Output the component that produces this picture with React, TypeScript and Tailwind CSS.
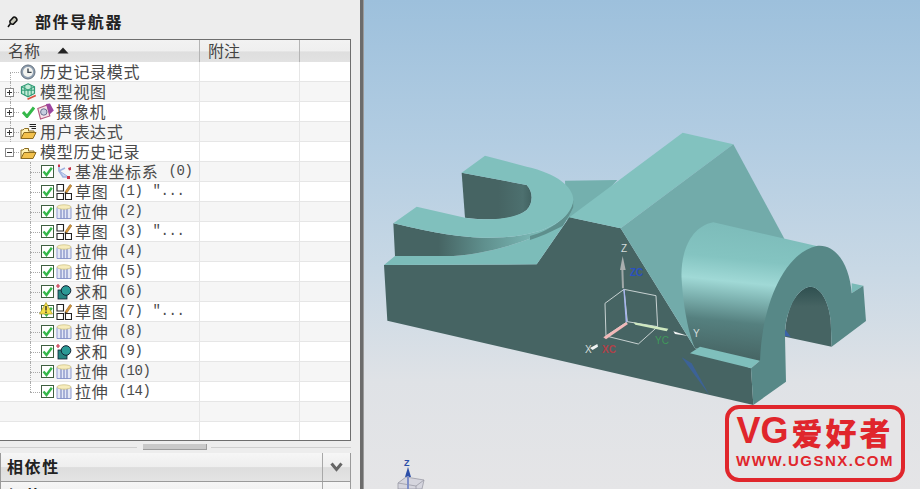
const cjk = "[font-family:'Noto_Sans_CJK_SC',sans-serif]";

type IconKind = "clock" | "view" | "camera" | "folder" | "folderNotes" | "csys" | "sketch" | "extrude" | "unite";

type Row = {
  label: string;
  num?: string;
  note?: boolean;
  icon?: IconKind;
  depth?: 0 | 1;
  toggle?: "+" | "-";
  check?: boolean;
  warn?: boolean;
};

const ROWS: Row[] = [
  { label: "历史记录模式", icon: "clock" },
  { label: "模型视图", icon: "view", toggle: "+" },
  { label: "摄像机", icon: "camera", toggle: "+", check: true },
  { label: "用户表达式", icon: "folderNotes", toggle: "+" },
  { label: "模型历史记录", icon: "folder", toggle: "-" },
  { label: "基准坐标系", num: "(0)", icon: "csys", depth: 1, check: true },
  { label: "草图", num: "(1)", note: true, icon: "sketch", depth: 1, check: true },
  { label: "拉伸", num: "(2)", icon: "extrude", depth: 1, check: true },
  { label: "草图", num: "(3)", note: true, icon: "sketch", depth: 1, check: true },
  { label: "拉伸", num: "(4)", icon: "extrude", depth: 1, check: true },
  { label: "拉伸", num: "(5)", icon: "extrude", depth: 1, check: true },
  { label: "求和", num: "(6)", icon: "unite", depth: 1, check: true },
  { label: "草图", num: "(7)", note: true, icon: "sketch", depth: 1, check: true, warn: true },
  { label: "拉伸", num: "(8)", icon: "extrude", depth: 1, check: true },
  { label: "求和", num: "(9)", icon: "unite", depth: 1, check: true },
  { label: "拉伸", num: "(10)", icon: "extrude", depth: 1, check: true },
  { label: "拉伸", num: "(14)", icon: "extrude", depth: 1, check: true },
  { label: "" },
  { label: "" },
];

function TreeIcon({ kind }: { kind: IconKind }) {
  if (kind === "clock") {
    return (
      <svg width="16" height="16" viewBox="0 0 16 16" className="shrink-0">
        <circle cx="8" cy="8" r="7" fill="#8f9fb0" stroke="#66727f" strokeWidth="1" />
        <circle cx="8" cy="8" r="5" fill="#f4f4f0" />
        <path d="M8 4.5V8.4H11.6" fill="none" stroke="#39434d" strokeWidth="1.4" />
      </svg>
    );
  }
  if (kind === "view") {
    return (
      <svg width="17" height="17" viewBox="0 0 17 17" className="shrink-0">
        <path d="M8 0.8L14.5 3.8V10.5L8 13.8L1.5 10.5V3.8Z" fill="#c4ecd8" stroke="#2f9a74" strokeWidth="1.2" />
        <path d="M1.5 3.8L8 7L14.5 3.8M8 7V13.8M4.8 2.3V12.2M11.2 2.3V12.2M1.5 7.2L14.5 7.2" fill="none" stroke="#2f9a74" strokeWidth="1" />
        <path d="M7.5 16.2L15.8 12.4" stroke="#d8503c" strokeWidth="1.7" />
      </svg>
    );
  }
  if (kind === "camera") {
    return (
      <svg width="17" height="17" viewBox="0 0 17 17" className="shrink-0">
        <path d="M0.8 5.5L10 2L12.8 13L3.5 16Z" fill="#f6e2e8" stroke="#b5577f" strokeWidth="1.1" />
        <circle cx="6.8" cy="9" r="3.2" fill="#c8cfe0" stroke="#6a6f90" />
        <path d="M9 1L13 0.6L16.8 7.5L12.5 11.5Z" fill="#9d46a0" />
      </svg>
    );
  }
  if (kind === "folder" || kind === "folderNotes") {
    return (
      <svg width="17" height="17" viewBox="0 0 17 17" className="shrink-0">
        {kind === "folderNotes" && <path d="M9.5 1.5H16M9.5 3.5H16M11.5 5.5H16" stroke="#222" strokeWidth="1" />}
        <path d="M1 15.5V7H3L4.5 5.5H8.5V8H14V10" fill="#fff2b4" stroke="#8a6a20" strokeWidth="1" />
        <path d="M1 15.5L4 9.5H16L13 15.5Z" fill="#f2c04c" stroke="#8a6a20" strokeWidth="1" />
      </svg>
    );
  }
  if (kind === "csys") {
    return (
      <svg width="16" height="16" viewBox="0 0 16 16" className="shrink-0">
        <path d="M3 1V7L12 13" fill="none" stroke="#8fa3d8" strokeWidth="1.4" />
        <path d="M3 7L9 4M3 7L7 13L12 13" fill="#cdd8f0" stroke="#9fb2e0" strokeWidth="1.4" />
        <path d="M2 0.5H4V3H2ZM12 4L15 3V6L13 6.5ZM11 12H14V15H11Z" fill="#c8344a" />
      </svg>
    );
  }
  if (kind === "sketch") {
    return (
      <svg width="16" height="17" viewBox="0 0 16 17" className="shrink-0">
        <path d="M1 1.5H7.5V8H1ZM1 10.5H7.5V16.5H1ZM9.5 10.5H15.5V16.5H9.5Z" fill="#fff" stroke="#222" strokeWidth="1.1" />
        <path d="M9 9L14 1.5L15.8 2.8L10.8 10Z" fill="#d99b3c" stroke="#8a5a20" strokeWidth="0.6" />
        <path d="M8.4 10.5L9 9L10.8 10Z" fill="#222" />
      </svg>
    );
  }
  if (kind === "extrude") {
    return (
      <svg width="16" height="16" viewBox="0 0 16 16" className="shrink-0">
        <path d="M1 3.5H15V14.5H1Z" fill="#e4e8f6" stroke="#8e9ace" strokeWidth="1" />
        <path d="M5 3.5V14.5M8 3.5V14.5M11 3.5V14.5" stroke="#7e8ac4" strokeWidth="1.2" />
        <ellipse cx="8" cy="3" rx="7" ry="2.2" fill="#f6ecbc" stroke="#cfc184" strokeWidth="0.8" />
      </svg>
    );
  }
  return (
    <svg width="16" height="16" viewBox="0 0 16 16" className="shrink-0">
      <path d="M2 0V4M0 2H4" stroke="#c8344a" strokeWidth="1.2" />
      <rect x="2" y="6" width="9" height="9" fill="#278581" stroke="#123" strokeWidth="0.8" />
      <circle cx="10" cy="6.5" r="4.8" fill="#2b9a96" stroke="#123" strokeWidth="1" />
    </svg>
  );
}

function CheckBox() {
  return (
    <svg width="13" height="13" viewBox="0 0 13 13" className="shrink-0">
      <rect x="0.5" y="0.5" width="12" height="12" fill="#fff" stroke="#3f5f3f" />
      <path d="M2.5 6.5L5.5 10L10.8 2.8" fill="none" stroke="#35b84a" strokeWidth="2.4" />
    </svg>
  );
}

function TreeRow({ row, index, last }: { row: Row; index: number; last: boolean }) {
  const isChild = row.depth === 1;
  return (
    <div
      className={`relative flex h-5 shrink-0 border-b border-[#e6e6e6] ${index % 2 === 1 ? "bg-[#f6f6f6]" : "bg-white"}`}
    >
      <div className="relative flex w-[200px] items-center border-r border-[#e6e6e6]">
        {/* tree guides */}
        {index < 4 && (
          <span
            className={`absolute left-[10px] border-l border-dotted border-[#aaa] ${index === 0 ? "top-[10px] h-[10px]" : "top-0 h-5"}`}
          />
        )}
        {index === 0 && <span className="absolute left-[10px] top-[10px] w-[9px] border-t border-dotted border-[#aaa]" />}
        {row.toggle && (
          <>
            <span className="absolute left-[13px] top-[10px] w-[6px] border-t border-dotted border-[#aaa]" />
            <span className="absolute left-[5px] top-[6px] flex h-[9px] w-[9px] items-center justify-center border border-[#8a8a8a] bg-white">
              <span className="absolute h-px w-[5px] bg-[#333]" />
              {row.toggle === "+" && <span className="absolute h-[5px] w-px bg-[#333]" />}
            </span>
          </>
        )}
        {isChild && (
          <>
            <span className={`absolute left-[30px] top-0 border-l border-dotted border-[#aaa] ${last ? "h-[10px]" : "h-5"}`} />
            <span className="absolute left-[30px] top-[10px] w-[10px] border-t border-dotted border-[#aaa]" />
          </>
        )}
        {row.label && (
          <div className={`flex items-center ${isChild ? "pl-[41px]" : row.check ? "pl-[22px]" : "pl-[20px]"}`}>
            {row.check && (
              <span className="relative flex shrink-0 items-center">
                {isChild ? (
                  <CheckBox />
                ) : (
                  <svg width="13" height="12" viewBox="0 0 13 12">
                    <path d="M1 6L5 10.5L12 1.5" fill="none" stroke="#35b84a" strokeWidth="3" />
                  </svg>
                )}
                {row.warn && (
                  <svg width="14" height="13" viewBox="0 0 14 13" className="absolute left-[-2px] top-[-3px]">
                    <path d="M7 0.5L13.5 12H0.5Z" fill="#f5e04a" stroke="#a99a30" strokeWidth="0.7" />
                    <path d="M7 4V8.5M7 9.5V11" stroke="#222" strokeWidth="1.3" />
                  </svg>
                )}
              </span>
            )}
            {row.icon && (
              <span className={`flex w-4 shrink-0 items-center justify-center ${row.check ? "ml-[2px]" : ""}`}>
                <TreeIcon kind={row.icon} />
              </span>
            )}
            <span
              className={`${isChild ? "ml-[3px]" : row.check ? "ml-[3px]" : "ml-[4px]"} -translate-y-px whitespace-pre text-[16px] leading-[18px] tracking-[0.7px] text-[#4a4a4a] ${cjk}`}
            >
              {row.label}
            </span>
            {row.num && (
              <span className="ml-[10px] -translate-y-px whitespace-pre font-['Liberation_Mono',monospace] text-[14px] leading-[18px] tracking-[-0.4px] text-[#4a4a4a]">
                {row.num}
              </span>
            )}
            {row.note && (
              <span className="ml-[10px] -translate-y-px whitespace-pre font-['Liberation_Mono',monospace] text-[14px] leading-[18px] tracking-[-0.4px] text-[#4a4a4a]">
                ″...
              </span>
            )}
          </div>
        )}
      </div>
      <div className="w-[100px] border-r border-[#e6e6e6]" />
      <div className="flex-1" />
    </div>
  );
}

function HeaderCell({ width, children }: { width: string; children?: React.ReactNode }) {
  return (
    <div className={`flex h-full items-center border-r border-[#b4b4b4] pl-[8px] ${width}`}>{children}</div>
  );
}

function SectionHeader({ title }: { title: string }) {
  return (
    <div className="flex h-[29px] w-[351px] shrink-0 border-b border-l border-r border-[#9a9a9a] bg-[linear-gradient(#f6f6f6_0%,#eeeeee_50%,#dddddd_52%,#e4e4e4_100%)]">
      <div className={`flex w-[322px] items-center border-r border-[#a8a8a8] pl-[6px] text-[16px] font-bold leading-[18px] tracking-[1.6px] text-[#222] ${cjk}`}>
        <span className="-translate-y-px">{title}</span>
      </div>
      <div className="flex flex-1 items-center justify-center">
        <svg width="13" height="10" viewBox="0 0 13 10">
          <path d="M1.5 1.5L6.5 7.5L11.5 1.5" fill="none" stroke="#666" strokeWidth="3" />
        </svg>
      </div>
    </div>
  );
}

function LeftPanel() {
  return (
    <div className="flex h-[489px] w-[360px] shrink-0 flex-col overflow-hidden bg-[#ededed]">
      <div className="flex h-[39px] shrink-0 items-center pl-[7px]">
        <svg width="11" height="12" viewBox="0 0 11 12" className="mt-[5px]">
          <path d="M1 11L3.5 7.5" stroke="#111" strokeWidth="1.5" />
          <path d="M3 5L6.5 1.2C8 0.5 10.5 2.5 9.8 4.5L6.2 8.2C4.5 8.6 2.5 7 3 5Z" fill="#c9c9bc" stroke="#111" strokeWidth="1.6" />
        </svg>
        <span className={`ml-[17px] mt-[3px] text-[16px] font-bold leading-[18px] tracking-[1.6px] text-[#222] ${cjk}`}>部件导航器</span>
      </div>

      <div className="flex h-[402px] w-[351px] shrink-0 flex-col overflow-hidden border border-l-0 border-[#6e6e6e]">
        <div className="flex h-[22px] shrink-0 bg-[linear-gradient(#f2f2f2_0%,#efefef_50%,#dedede_54%,#e2e2e2_100%)]">
          <HeaderCell width="w-[200px]">
            <span className={`-translate-y-px text-[16px] leading-[18px] text-[#444] ${cjk}`}>名称</span>
            <svg width="12" height="7" viewBox="0 0 12 7" className="ml-[17px] -translate-y-px">
              <path d="M6 0.5L11.5 6.5H0.5Z" fill="#222" />
            </svg>
          </HeaderCell>
          <HeaderCell width="w-[100px]">
            <span className={`-translate-y-px text-[16px] leading-[18px] text-[#444] ${cjk}`}>附注</span>
          </HeaderCell>
          <div className="flex-1" />
        </div>
        {ROWS.map((row, i) => (
          <TreeRow key={i} row={row} index={i} last={i === 16} />
        ))}
      </div>

      {/* splitter */}
      <div className="flex h-3 w-[351px] shrink-0 items-center">
        <span className="h-px w-[137px] bg-[#cfcfcf]" />
        <span className="ml-[6px] h-[6px] w-[64px] border-b border-r border-[#9d9d9d] bg-[#c9c9c9]" />
        <span className="ml-[4px] h-px flex-1 bg-[#cfcfcf]" />
      </div>

      <SectionHeader title="相依性" />
      <SectionHeader title="细节" />
    </div>
  );
}

function Model() {
  return (
    <svg width="556" height="489" viewBox="364 0 556 489" className="block">
      <defs>
        <linearGradient id="wall" x1="70" y1="0" x2="610" y2="0" gradientUnits="userSpaceOnUse">
          <stop offset="0.25" stopColor="#466463" />
          <stop offset="0.5" stopColor="#5f8f8d" />
          <stop offset="0.8" stopColor="#7cbab7" />
          <stop offset="1" stopColor="#82c1be" />
        </linearGradient>
        <linearGradient id="inner" x1="280" y1="0" x2="490" y2="0" gradientUnits="userSpaceOnUse">
          <stop offset="0.5" stopColor="#466463" />
          <stop offset="0.85" stopColor="#4d706f" />
          <stop offset="1" stopColor="#3f5f5e" />
        </linearGradient>
        <linearGradient id="cyl" x1="1040" y1="310" x2="1000" y2="710" gradientUnits="userSpaceOnUse">
          <stop offset="0" stopColor="#7dbcba" />
          <stop offset="0.25" stopColor="#84c4c1" />
          <stop offset="0.42" stopColor="#a0d9d6" />
          <stop offset="0.55" stopColor="#7eb3b1" />
          <stop offset="0.72" stopColor="#55807f" />
          <stop offset="1" stopColor="#466463" />
        </linearGradient>
        <linearGradient id="hole" x1="0" y1="500" x2="0" y2="620" gradientUnits="userSpaceOnUse">
          <stop offset="0" stopColor="#2f5050" />
          <stop offset="0.5" stopColor="#466463" />
          <stop offset="1" stopColor="#466463" />
        </linearGradient>
      </defs>
      <g transform="translate(370 120) scale(0.33333)">
        {/* back plate */}
        <path d="M585 182L742 180L640 290L590 300Z" fill="#74b0ae" />
        {/* base front */}
        <path d="M42 435L500 433L598 292L752 325L975 685L1143 745L1150 855L52 602Z" fill="#466463" />
        {/* ledge */}
        <path d="M42 435L75 408L250 408C350 400 470 370 585 310L500 433Z" fill="#7cbcb9" />
        {/* fork wall */}
        <path d="M70 310C220 345 300 358 400 352C520 345 605 300 610 240L610 262C600 285 590 300 585 310C470 370 350 400 250 408L75 408Z" fill="url(#wall)" />
        <path d="M480 348C545 330 600 290 610 240L610 262C600 285 590 300 578 318C545 335 510 350 480 360Z" fill="#5e8f8d" />
        {/* fork inner */}
        <path d="M275 158L470 195C490 215 490 250 470 270C440 295 380 305 285 293Z" fill="url(#inner)" />
        {/* fork top */}
        <path d="M70 310L140 260L285 293C360 305 440 295 470 270C490 250 490 215 470 195L275 158L345 107L470 140C560 160 610 200 610 240C605 300 520 345 400 352C300 358 220 345 70 310Z" fill="#80c0bd" />
        {/* rib */}
        <path d="M598 292L938 38L1090 73L752 325Z" fill="#82c2bf" />
        <path d="M1090 73L752 325L975 685L1200 700L1300 480L1240 350Z" fill="#72abaa" />
        {/* boss */}
        <path d="M1030 307C960 320 930 400 935 480C940 560 955 640 975 685L1175 725L1300 480L1340 378Z" fill="url(#cyl)" />
        {/* ledge at boss */}
        <path d="M960 700L990 680L1170 722L1143 745Z" fill="#7fbfbc" />
        {/* arch hole */}
        <path d="M1245 650C1245 570 1280 505 1320 500C1350 500 1375 540 1382 600L1385 680Z" fill="url(#hole)" />
        <path d="M1243 625L1262 650L1245 648Z" fill="#3a62a8" />
        {/* right end */}
        <path d="M1445 490L1480 497L1445 520Z" fill="#7abab7" />
        {/* front face */}
        <path d="M1143 745L1170 722C1175 560 1240 400 1340 378C1400 370 1440 440 1445 520L1480 497L1488 603L1385 680L1382 600C1375 540 1350 500 1320 500C1280 505 1245 570 1245 650L1248 785L1150 855Z" fill="#578887" />
        {/* blue streak */}
        <path d="M935 712L965 730L1018 825Z" fill="#3a62a8" fillOpacity="0.75" />
      </g>
      {/* WCS triad */}
      <g transform="translate(570 230) scale(0.33333)">
        <path d="M105 220L162 178L258 197L263 290L205 342L108 318Z M172 275L162 178 M172 275L263 290 M172 275L108 318" fill="none" stroke="#c8d2d2" strokeWidth="3" />
        <path d="M159 175L157 115" stroke="#a0a8a8" strokeWidth="6" />
        <path d="M158 78L167 120L150 120Z" fill="#a9aeae" />
        <path d="M164 178L172 275L167 276L160 178Z" fill="#a6b4ee" />
        <path d="M168 277L100 322L108 328L174 282Z" fill="#f2b9b9" />
        <path d="M190 277L295 296L290 304L196 284Z" fill="#cfe9c0" />
        <path d="M82 342L60 354L68 360L84 350Z" fill="#f2f4f4" />
        <path d="M310 304L355 318L315 312Z" fill="#f2f4f4" />
      </g>
      <g fontFamily="'Liberation Sans',sans-serif" fontSize="10">
        <text x="621" y="252" fill="#d4dcdc">Z</text>
        <text x="630" y="276" fill="#2a50c0" fontWeight="bold">ZC</text>
        <text x="693" y="337" fill="#d4dcdc">Y</text>
        <text x="655" y="344" fill="#3f9a5a">YC</text>
        <text x="585" y="353" fill="#d4dcdc">X</text>
        <text x="602" y="353" fill="#b04048" fontWeight="bold">XC</text>
      </g>
      {/* lower triad */}
      <text x="404" y="466" fontFamily="'Liberation Sans',sans-serif" fontSize="9" fontWeight="bold" fill="#2c4fa8">Z</text>
      <path d="M408 467L411 477H405Z" fill="#2c4fa8" />
      <path d="M398 483L406 477L424 480L422 489H398Z" fill="#d5d5de" stroke="#9a9aa6" strokeWidth="0.8" />
      <path d="M398 483L416 486L424 480M416 486V489" fill="none" stroke="#9a9aa6" strokeWidth="0.8" />
      <path d="M408 476V489" stroke="#7f8fc8" strokeWidth="2" />
    </svg>
  );
}

function Logo() {
  return (
    <div className="absolute left-[361px] top-[405px] flex h-[77px] w-[180px] flex-col items-center rounded-[14px] border-4 border-[#e0262c] bg-[#e5e5e7] text-[#e0262c]">
      <div className={`mt-[2px] flex h-[40px] items-center whitespace-pre text-[31px] font-black leading-none ${cjk}`}>
        <span className="mr-[3px] font-['Liberation_Sans',sans-serif] text-[36px] font-bold">VG</span>
        <span className="tracking-[3px]">爱好者</span>
      </div>
      <span className="font-['Liberation_Sans',sans-serif] text-[15px] font-bold leading-[20px] tracking-[1.5px]">WWW.UGSNX.COM</span>
    </div>
  );
}

export default function App() {
  return (
    <div className="flex h-[489px] w-[920px] overflow-hidden">
      <LeftPanel />
      <div className="w-1 shrink-0 border-r border-[#9a9a9a] bg-[#6c6c6c]" />
      <div className="relative flex-1 overflow-hidden bg-[linear-gradient(#9dc0dc_0%,#b3cde2_30%,#c8d8e5_55%,#dfe2e6_78%,#e5e5e7_100%)]">
        <Model />
        <Logo />
      </div>
    </div>
  );
}
